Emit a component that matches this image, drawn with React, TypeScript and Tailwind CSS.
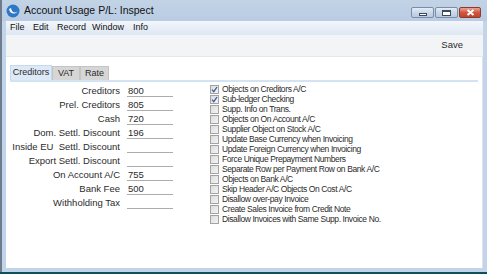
import React from 'react';

const fields: { label: string; value: string }[] = [
  { label: 'Creditors', value: '800' },
  { label: 'Prel. Creditors', value: '805' },
  { label: 'Cash', value: '720' },
  { label: 'Dom. Settl. Discount', value: '196' },
  { label: 'Inside EU  Settl. Discount', value: '' },
  { label: 'Export Settl. Discount', value: '' },
  { label: 'On Account A/C', value: '755' },
  { label: 'Bank Fee', value: '500' },
  { label: 'Withholding Tax', value: '' },
];

const options: { label: string; checked: boolean }[] = [
  { label: 'Objects on Creditors A/C', checked: true },
  { label: 'Sub-ledger Checking', checked: true },
  { label: 'Supp. Info on Trans.', checked: false },
  { label: 'Objects on On Account A/C', checked: false },
  { label: 'Supplier Object on Stock A/C', checked: false },
  { label: 'Update Base Currency when Invoicing', checked: false },
  { label: 'Update Foreign Currency when Invoicing', checked: false },
  { label: 'Force Unique Prepayment Numbers', checked: false },
  { label: 'Separate Row per Payment Row on Bank A/C', checked: false },
  { label: 'Objects on Bank A/C', checked: false },
  { label: 'Skip Header A/C Objects On Cost A/C', checked: false },
  { label: 'Disallow over-pay Invoice', checked: false },
  { label: 'Create Sales Invoice from Credit Note', checked: false },
  { label: 'Disallow Invoices with Same Supp. Invoice No.', checked: false },
];

const menu: { label: string; w: string }[] = [
  { label: 'File', w: 'w-[23px]' },
  { label: 'Edit', w: 'w-[24px]' },
  { label: 'Record', w: 'w-[35px]' },
  { label: 'Window', w: 'w-[41px]' },
  { label: 'Info', w: 'w-[24px]' },
];

const CheckBox: React.FC<{ checked: boolean }> = ({ checked }) => (
  <span className="flex h-[9px] w-[9px] shrink-0 items-center justify-center border border-[#a3a3a3] bg-gradient-to-br from-[#dcdcdc] to-[#f4f4f4]">
    {checked && (
      <svg width="7" height="7" viewBox="0 0 7 7">
        <path d="M1 3.6 L2.8 5.6 L6 1" stroke="#3a5b9c" strokeWidth="1.3" fill="none" />
      </svg>
    )}
  </span>
);

const WinButton: React.FC<{ kind: 'min' | 'max' | 'close' }> = ({ kind }) => {
  const base =
    kind === 'close'
      ? 'w-[22px] border-[#8a3b30] bg-gradient-to-b from-[#e8a493] via-[#d2553f] to-[#c2442c]'
      : 'w-[23px] border-[#7c8ea6] bg-gradient-to-b from-[#e4ecf6] via-[#c9d7e8] to-[#b8cae0]';
  return (
    <div className={`flex h-[11px] items-center justify-center rounded-[2px] border ${base}`}>
      {kind === 'min' && <span className="mt-[3px] h-[3px] w-[8px] border border-[#3b4a5e] bg-white" />}
      {kind === 'max' && <span className="h-[6px] w-[9px] border border-[#3b4a5e] border-t-2 bg-white" />}
      {kind === 'close' && (
        <svg width="9" height="7" viewBox="0 0 9 7">
          <path d="M1.5 1 L7.5 6 M7.5 1 L1.5 6" stroke="#fff" strokeWidth="2" />
        </svg>
      )}
    </div>
  );
};

export default function App() {
  return (
    <div
      className="flex h-[274px] w-[487px] flex-col overflow-hidden bg-[#0e4f5c] text-[#2b2b2b]"
      style={{ fontFamily: 'Tahoma, "Liberation Sans", Arial, sans-serif' }}
    >
      <div className="flex h-[272px] flex-col border-l-2 border-[#6e7c8e] bg-[#c1d4ea]">
        {/* title bar */}
        <div className="flex h-[21px] shrink-0 items-center bg-gradient-to-b from-[#c3d3e6] to-[#b8cce3] pl-[4px] pr-[6px]">
          <svg width="14" height="14" viewBox="0 0 14 14" className="mr-[4px]">
            <circle cx="7" cy="7" r="6.5" fill="#2e78c6" />
            <path d="M3 5 C4 10, 9 11, 11.5 7.5 C9 9.5, 5.5 8.5, 5 4 Z" fill="#fff" />
          </svg>
          <span className="text-[10.5px] text-[#111]">Account Usage P/L: Inspect</span>
          <div className="ml-auto flex gap-[1px] self-start pt-[7px]">
            <WinButton kind="min" />
            <WinButton kind="max" />
            <WinButton kind="close" />
          </div>
        </div>
        <div className="flex flex-1 flex-col pl-[4px] pr-[4px] pb-[4px]">
          {/* menu bar */}
          <div className="flex h-[14px] shrink-0 items-center bg-gradient-to-b from-[#f3f6fb] to-[#dde6f2] pl-[4px] text-[9px] text-[#111]">
            {menu.map((m) => (
              <span key={m.label} className={m.w}>
                {m.label}
              </span>
            ))}
          </div>
          {/* toolbar */}
          <div className="flex h-[22px] shrink-0 items-center justify-end border-b border-[#e6e8ec] bg-[#f3f4f6] pr-[20px] text-[9.5px]">
            <span>Save</span>
          </div>
          {/* content */}
          <div className="flex flex-1 flex-col border-r border-[#dfe3e8] bg-white px-[4px] pt-[10px]">
            <div className="flex h-[15px] items-end border-b-2 border-[#d4e3f4] text-[9px]">
              <div className="flex h-[15px] w-[42px] items-center justify-center border border-b-0 border-[#c8d8ea] bg-[#dde9f7]">Creditors</div>
              <div className="flex h-[14px] w-[28px] items-center justify-center border border-b-0 border-[#c4c4c4] bg-[#d6d6d6]">VAT</div>
              <div className="flex h-[14px] w-[29px] items-center justify-center border border-b-0 border-[#c4c4c4] bg-[#d6d6d6]">Rate</div>
            </div>
            <div className="flex pt-[2px] text-[9.5px]">
              <div className="flex w-[163px] flex-col">
                {fields.map((f) => (
                  <div key={f.label} className="flex h-[14px] items-center">
                    <span className="w-[110px] whitespace-pre text-right">{f.label}</span>
                    <span className="ml-[7px] h-[11px] w-[46px] border-b border-[#acacac] pl-[1px] leading-[10px]">{f.value}</span>
                  </div>
                ))}
              </div>
              <div className="ml-[37px] flex flex-col">
                {options.map((o) => (
                  <div key={o.label} className="flex h-[10px] items-center gap-[3px] text-[8.5px] leading-[10px] tracking-[-0.4px]">
                    <CheckBox checked={o.checked} />
                    <span className="whitespace-nowrap">{o.label}</span>
                  </div>
                ))}
              </div>
            </div>
          </div>
        </div>
      </div>
    </div>
  );
}
